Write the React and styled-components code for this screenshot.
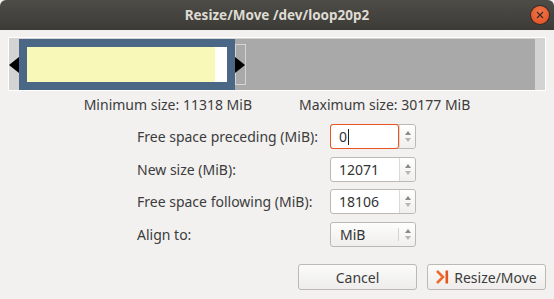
import React from 'react';
import styled, { createGlobalStyle } from 'styled-components';

const GlobalStyle = createGlobalStyle`
  html, body { margin: 0; padding: 0; background: #f2f1f0; }
  body { font-family: 'Noto Sans', 'DejaVu Sans', sans-serif; font-size: 14px; color: #3c3c3c; }
`;

const Window = styled.div`
  width: 554px;
  height: 299px;
  display: flex;
  flex-direction: column;
  background: #f2f1f0;
  overflow: hidden;
`;

const TitleBar = styled.div`
  height: 30px;
  flex: none;
  display: flex;
  align-items: center;
  justify-content: center;
  position: relative;
  background: linear-gradient(#4d4c47, #3c3b37);
  border-radius: 6px 6px 0 0;
  color: #dfdbd2;
  font-weight: bold;
  font-size: 13.5px;
`;

const CloseButton = styled.div`
  position: absolute;
  right: 5px;
  top: 6px;
  width: 18px;
  height: 18px;
  border-radius: 50%;
  background: radial-gradient(circle at 50% 35%, #f3784b, #df4a1c);
  box-shadow: 0 0 0 1px #3a2a22;
  display: flex;
  align-items: center;
  justify-content: center;
`;

const Frame = styled.div`
  position: relative;
  margin: 7px 8px 0;
  height: 51px;
  border: 1px solid #ffffff;
  background: #d3d3d3;
  padding: 1px 10px 0;
  display: flex;
`;

const Partition = styled.div`
  width: 216px;
  background: #4a6785;
  padding: 8px;
  display: flex;
  box-sizing: border-box;
`;

const Used = styled.div`
  flex: 1;
  background: #f8f8b9;
`;

const Free = styled.div`
  width: 12px;
  background: #ffffff;
`;

const Unallocated = styled.div`
  flex: 1;
  background: #a9a9a9;
`;

const LeftHandle = styled.div`
  position: absolute;
  left: 0;
  top: 19px;
  width: 0;
  height: 0;
  border-top: 8px solid transparent;
  border-bottom: 8px solid transparent;
  border-right: 10px solid #000;
`;

const RightHandle = styled.div`
  position: absolute;
  left: 226px;
  top: 6px;
  width: 9px;
  height: 39px;
  border: 1px solid #d4d4d4;
  display: flex;
  align-items: center;
  &::before {
    content: '';
    border-top: 8px solid transparent;
    border-bottom: 8px solid transparent;
    border-left: 10px solid #000;
    margin-left: -1px;
  }
`;

const SizeInfo = styled.div`
  display: flex;
  justify-content: center;
  gap: 47px;
  margin-top: 4px;
  height: 19px;
  line-height: 19px;
`;

const Form = styled.div`
  display: grid;
  grid-template-columns: 185px 86px;
  justify-content: center;
  column-gap: 8px;
  row-gap: 7.5px;
  margin-top: 10px;
  margin-left: -1px;
`;

const Label = styled.div`
  height: 25px;
  display: flex;
  align-items: center;
`;

const Spin = styled.div`
  height: 25px;
  display: flex;
  box-sizing: border-box;
  border: 1px solid #bcb9b4;
  border-radius: 3px;
  background: #ffffff;
  position: relative;
`;

const Entry = styled.div`
  flex: 1;
  display: flex;
  align-items: center;
  padding-left: 8px;
  color: #333;
  ${p => p.$focus && `
    margin: -1px 0 -1px -1px;
    border: 1px solid #e95420;
    border-radius: 3px;
  `}
`;

const Caret = styled.span`
  display: inline-block;
  width: 1px;
  height: 16px;
  background: #222;
  margin-left: 1px;
`;

const Arrows = styled.div`
  width: 15px;
  border-left: 1px solid ${p => (p.$combo ? 'transparent' : '#dcdad5')};
  display: flex;
  flex-direction: column;
  align-items: center;
  justify-content: center;
  gap: 3px;
  background: linear-gradient(#ffffff, #f0efed);
  border-radius: 0 3px 3px 0;
`;

const Combo = styled(Spin)`
  background: linear-gradient(#fdfdfc, #efeeec);
`;

const ComboText = styled.div`
  flex: 1;
  display: flex;
  align-items: center;
  padding-left: 9px;
  color: #333;
`;

const ComboSep = styled.div`
  width: 1px;
  margin: 5px 0;
  background: #d6d4d0;
`;

const Buttons = styled.div`
  display: flex;
  justify-content: flex-end;
  gap: 10px;
  margin: auto 8px 9px 0;
`;

const Button = styled.button`
  width: 119px;
  height: 26px;
  border: 1px solid #bcb9b4;
  border-radius: 3px;
  background: linear-gradient(#fbfbfa, #eeedeb);
  font-family: inherit;
  font-size: 14px;
  color: #3c3c3c;
  display: flex;
  align-items: center;
  justify-content: center;
  gap: 4px;
  padding: 0;
`;

const Up = () => (
  <svg width="6" height="4" viewBox="0 0 6 4"><path d="M0 4 L3 0 L6 4 Z" fill="#8a8a8a" /></svg>
);
const Down = () => (
  <svg width="6" height="4" viewBox="0 0 6 4"><path d="M0 0 L3 4 L6 0 Z" fill="#b5b5b5" /></svg>
);

const ApplyIcon = () => (
  <svg width="14" height="16" viewBox="0 0 14 16">
    <path d="M1 2 L7 8 L1 14" fill="none" stroke="#ef6a2c" strokeWidth="2.6" strokeLinejoin="miter" />
    <rect x="9.5" y="1.5" width="2.6" height="13" fill="#e4571f" />
  </svg>
);

const SpinField = ({ value, focus }) => (
  <Spin>
    <Entry $focus={focus}>
      {value}
      {focus && <Caret />}
    </Entry>
    <Arrows>
      <Up />
      <Down />
    </Arrows>
  </Spin>
);

export default function App() {
  return (
    <Window>
      <GlobalStyle />
      <TitleBar>
        Resize/Move /dev/loop20p2
        <CloseButton>
          <svg width="8" height="8" viewBox="0 0 8 8">
            <path d="M1 1 L7 7 M7 1 L1 7" stroke="#3b2a22" strokeWidth="1.3" />
          </svg>
        </CloseButton>
      </TitleBar>

      <Frame>
        <Partition>
          <Used />
          <Free />
        </Partition>
        <Unallocated />
        <LeftHandle />
        <RightHandle />
      </Frame>

      <SizeInfo>
        <span>Minimum size: 11318 MiB</span>
        <span>Maximum size: 30177 MiB</span>
      </SizeInfo>

      <Form>
        <Label>Free space preceding (MiB):</Label>
        <SpinField value="0" focus />
        <Label>New size (MiB):</Label>
        <SpinField value="12071" />
        <Label>Free space following (MiB):</Label>
        <SpinField value="18106" />
        <Label>Align to:</Label>
        <Combo>
          <ComboText>MiB</ComboText>
          <ComboSep />
          <Arrows $combo>
            <Up />
            <Down />
          </Arrows>
        </Combo>
      </Form>

      <Buttons>
        <Button>Cancel</Button>
        <Button>
          <ApplyIcon />
          Resize/Move
        </Button>
      </Buttons>
    </Window>
  );
}
